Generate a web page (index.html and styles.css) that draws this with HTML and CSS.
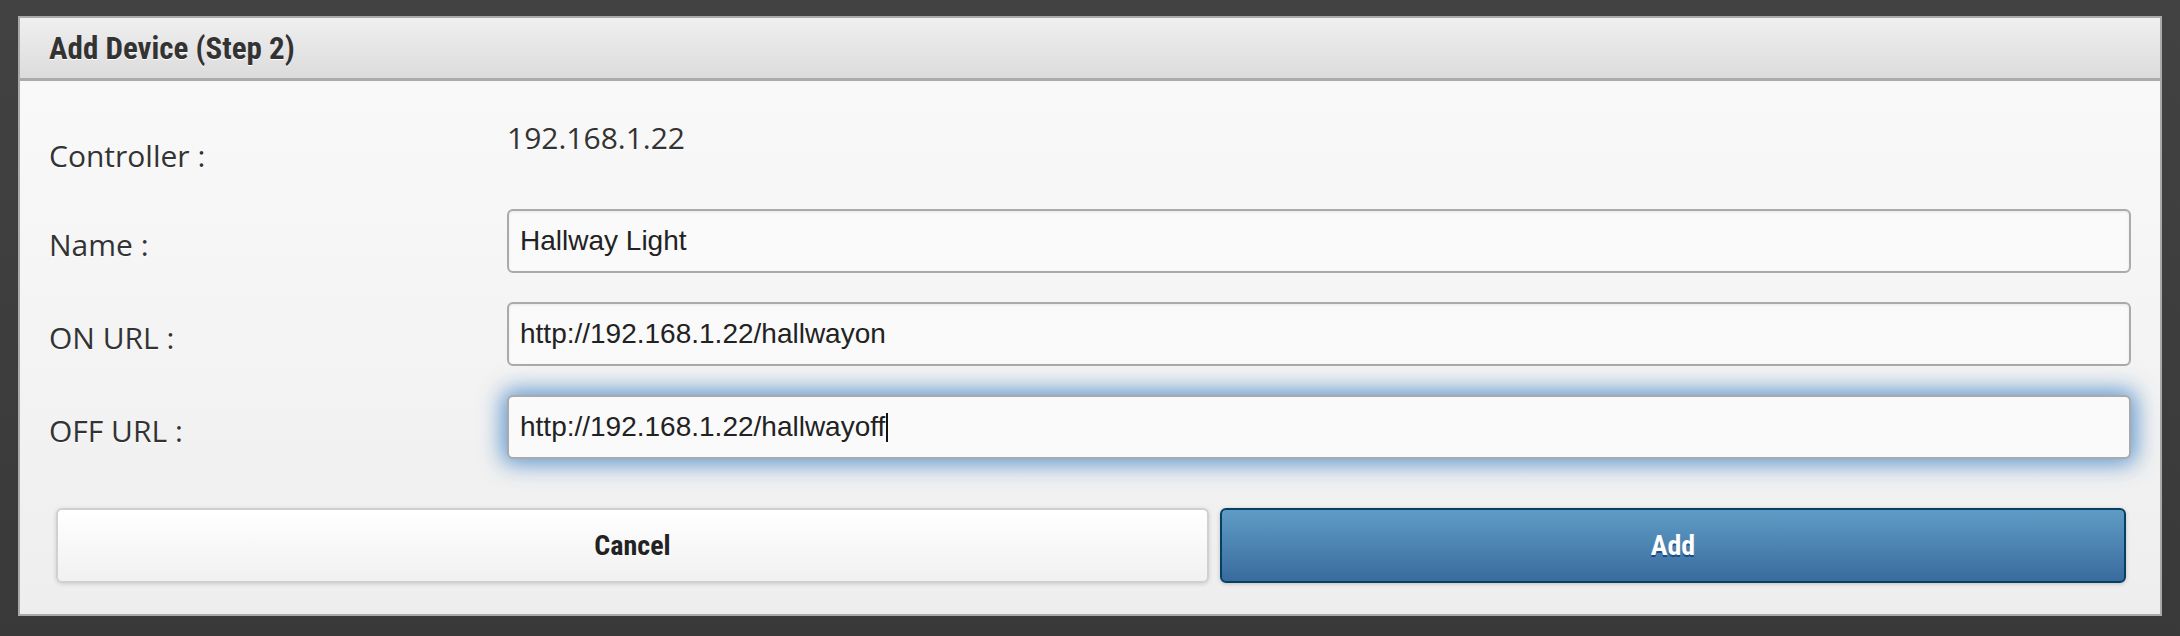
FILE: index.html
```html
<!DOCTYPE html>
<html lang="en">
<head>
<meta charset="utf-8">
<title>Add Device (Step 2)</title>
<link rel="stylesheet" href="styles.css">
</head>
<body>
<div class="dialog" role="dialog" aria-labelledby="dlg-title">
  <div class="dialog-header">
    <h1 class="dialog-title" id="dlg-title">Add Device (Step 2)</h1>
  </div>
  <div class="dialog-content">
    <div class="row row-static">
      <span class="label">Controller :</span>
      <span class="value">192.168.1.22</span>
    </div>
    <div class="row row-field">
      <label class="label" for="name">Name :</label>
      <div class="field-wrap">
        <input class="field" id="name" type="text" value="Hallway Light">
      </div>
    </div>
    <div class="row row-field">
      <label class="label" for="onurl">ON URL :</label>
      <div class="field-wrap">
        <input class="field" id="onurl" type="text" value="http://192.168.1.22/hallwayon">
      </div>
    </div>
    <div class="row row-field">
      <label class="label" for="offurl">OFF URL :</label>
      <div class="field-wrap">
        <input class="field field-focus" id="offurl" type="text" value="http://192.168.1.22/hallwayoff">
        <span class="caret" aria-hidden="true"></span>
      </div>
    </div>
    <div class="actions">
      <button class="btn btn-cancel" type="button">Cancel</button>
      <button class="btn btn-add" type="button">Add</button>
    </div>
  </div>
</div>
</body>
</html>
```
FILE: styles.css
```css
* { box-sizing: border-box; }
html, body { margin: 0; height: 100%; }
body {
  background: linear-gradient(#424242, #393939);
  padding: 16px 18px 0;
  font-family: "Open Sans", "DejaVu Sans", sans-serif;
}
.dialog {
  width: 2144px;
  height: 600px;
  border: 2px solid #a9a9a9;
  display: flex;
  flex-direction: column;
}
.dialog-header {
  height: 63px;
  flex: none;
  border-bottom: 3px solid #ababab;
  background: linear-gradient(#efefef, #dcdcdc);
  padding-left: 29px;
  display: flex;
  align-items: center;
}
.dialog-title {
  margin: 0;
  font: bold 31px/1 "Roboto Condensed", "Open Sans Condensed", sans-serif;
  color: #333;
  text-shadow: 0 1px 0 #fff;
}
.dialog-content {
  flex: 1;
  background: linear-gradient(#f9f9f9, #eeeeee);
  padding: 37px 29px 0;
}
.row {
  display: flex;
  align-items: flex-start;
}
.label {
  width: 458px;
  flex: none;
  font-size: 30px;
  line-height: 40px;
  color: #333;
  text-shadow: 0 1px 0 #fff;
}
.value {
  font-size: 30px;
  line-height: 40px;
  color: #333;
  text-shadow: 0 1px 0 #fff;
}
.row-static { margin-bottom: 33px; }
.row-static .label { padding-top: 18px; }
.row-field .label { padding-top: 16px; }
.row-field + .row-field { margin-top: 29px; }
.field-wrap {
  flex: 1;
  min-width: 0;
  display: flex;
  position: relative;
}
.field {
  flex: 1;
  min-width: 0;
  height: 64px;
  border: 2px solid #aaaaaa;
  border-radius: 6px;
  background: #fafafa;
  padding: 0 11px;
  font: 28px "Liberation Sans", Arial, sans-serif;
  color: #222;
  box-shadow: inset 0 1px 3px rgba(0, 0, 0, 0.08);
  outline: none;
}
.field-focus {
  box-shadow: 0 0 22px 5px rgba(70, 135, 200, 0.85);
}
.caret {
  position: absolute;
  left: 379px;
  top: 18px;
  width: 2px;
  height: 29px;
  background: #111;
}
.actions {
  margin: 49px 5px 0 7px;
  display: grid;
  grid-template-columns: 1153fr 906fr;
  gap: 11px;
}
.btn {
  height: 75px;
  border-radius: 6px;
  font: bold 28px/1 "Roboto Condensed", "Open Sans Condensed", sans-serif;
  cursor: pointer;
}
.btn-cancel {
  border: 2px solid #d0d0d0;
  background: linear-gradient(#ffffff, #f1f1f1);
  color: #222;
  text-shadow: 0 1px 0 #fff;
  box-shadow: 0 1px 4px rgba(0, 0, 0, 0.15);
}
.btn-add {
  border: 2px solid #044062;
  background: linear-gradient(#5f9cc5, #396b9e);
  color: #fff;
  text-shadow: 0 2px 0 #194b7e;
  box-shadow: 0 1px 4px rgba(0, 0, 0, 0.2);
}
```
